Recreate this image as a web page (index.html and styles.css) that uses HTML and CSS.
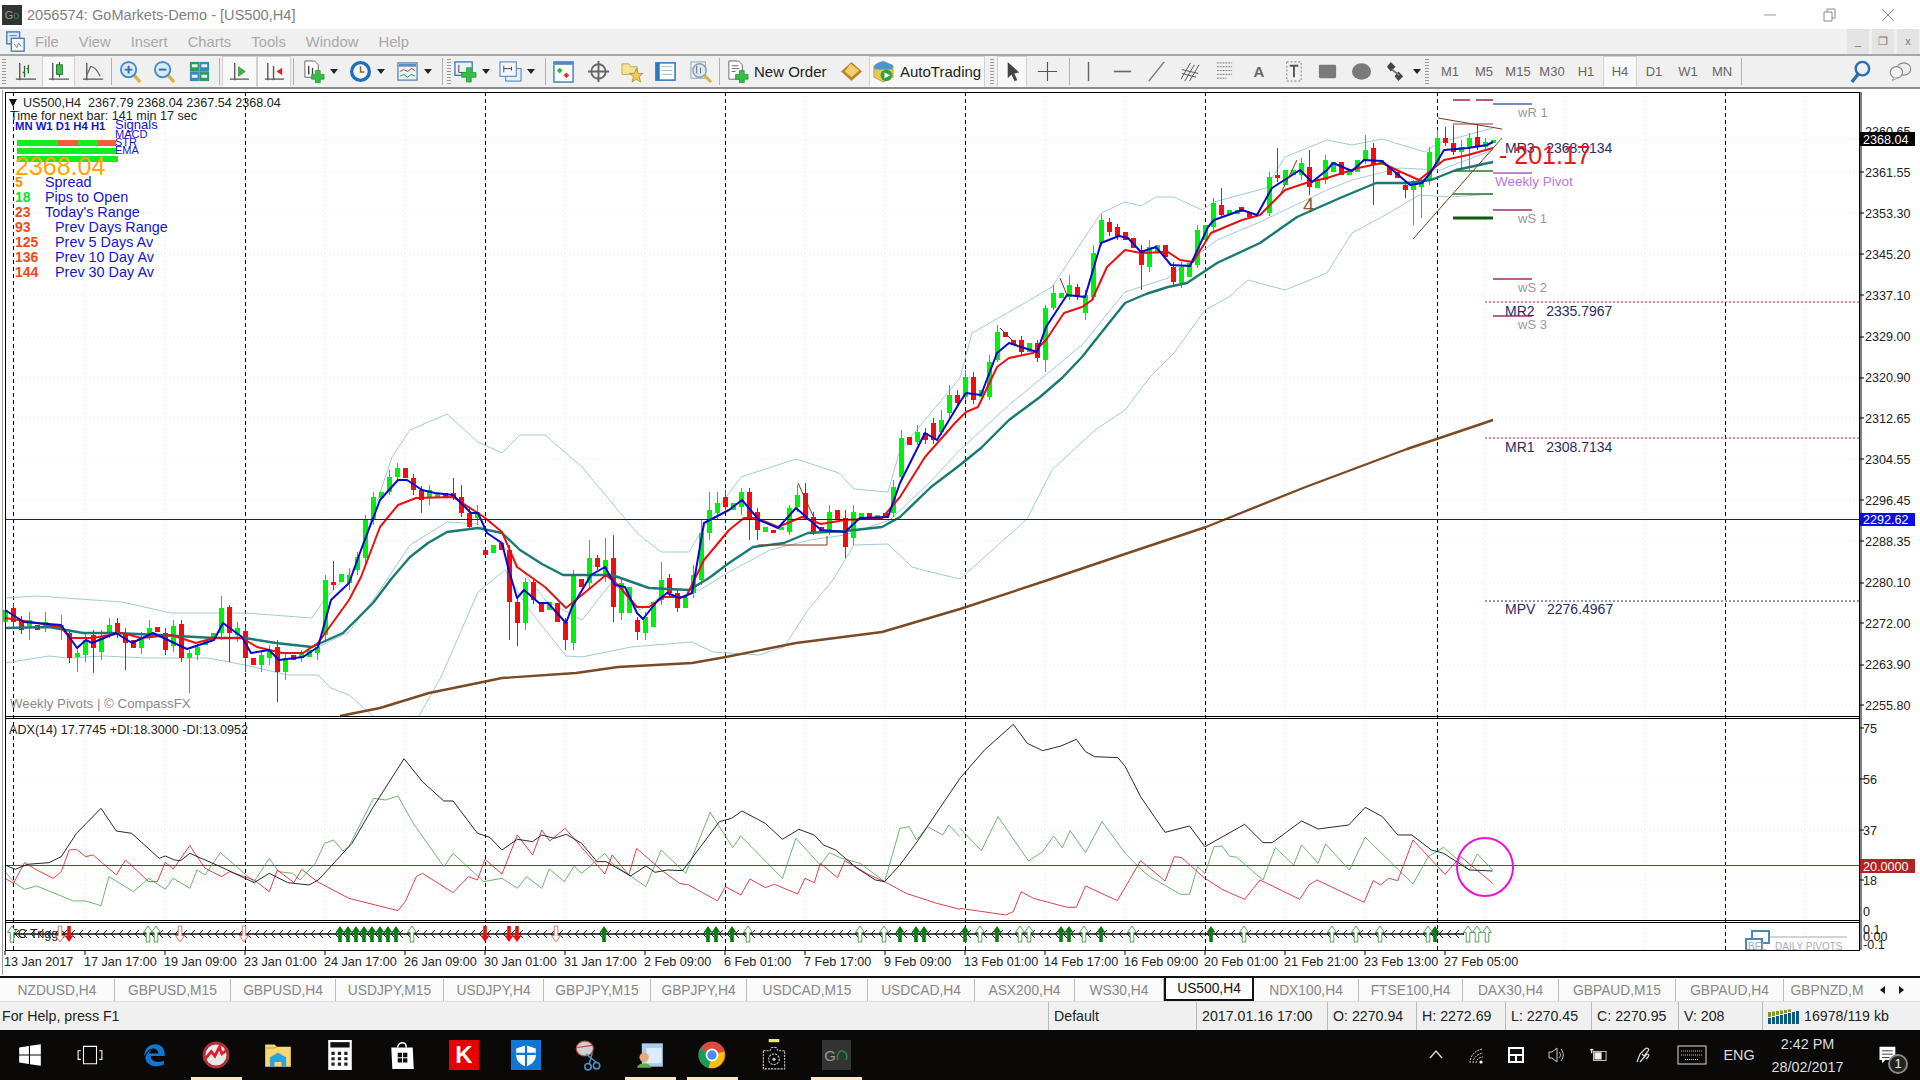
FILE: index.html
```html
<!DOCTYPE html>
<html lang="en">
<head>
<meta charset="utf-8">
<title>2056574: GoMarkets-Demo - [US500,H4]</title>
<link rel="stylesheet" href="styles.css">
</head>
<body>
<svg class="defs" width="0" height="0" aria-hidden="true">
  <defs>
    <symbol id="i-bar" viewBox="0 0 24 24"><path d="M6 3V21M2 20H23M3 20l3 0" fill="none" stroke="#555" stroke-width="1.4"/><path d="M11 6V18M15 5V14M13 9h2M9 13h2" fill="none" stroke="#2c6b2c" stroke-width="1.4"/></symbol>
    <symbol id="i-candle" viewBox="0 0 24 24"><path d="M6 3V21M2 20H23" fill="none" stroke="#555" stroke-width="1.4"/><path d="M13 2V18" stroke="#333"/><rect x="10" y="5" width="6" height="10" fill="#3fc04a" stroke="#2a6a2a"/></symbol>
    <symbol id="i-line" viewBox="0 0 24 24"><path d="M6 3V21M2 20H23" fill="none" stroke="#555" stroke-width="1.4"/><path d="M6 16L10 7C14 6 17 11 20 17" fill="none" stroke="#666" stroke-width="1.3"/></symbol>
    <symbol id="i-zin" viewBox="0 0 24 24"><path d="M15 15L22 23" stroke="#d9b13b" stroke-width="3.4"/><circle cx="10" cy="10" r="8" fill="#d8e9f8" stroke="#4d8cc8" stroke-width="2"/><path d="M6 10H14M10 6V14" stroke="#2c6cb0" stroke-width="2"/></symbol>
    <symbol id="i-zout" viewBox="0 0 24 24"><path d="M15 15L22 23" stroke="#d9b13b" stroke-width="3.4"/><circle cx="10" cy="10" r="8" fill="#d8e9f8" stroke="#4d8cc8" stroke-width="2"/><path d="M6 10H14" stroke="#2c6cb0" stroke-width="2"/></symbol>
    <symbol id="i-tile" viewBox="0 0 24 24"><rect x="2" y="2" width="10" height="10" fill="#2d9b5b"/><rect x="12" y="2" width="10" height="10" fill="#3b87c9"/><rect x="2" y="12" width="10" height="10" fill="#3b87c9"/><rect x="12" y="12" width="10" height="10" fill="#2d9b5b"/><path d="M4 6h6M14 6h6M4 17h6M14 17h6" stroke="#e8f4ec" stroke-width="3"/></symbol>
    <symbol id="i-shift" viewBox="0 0 24 24"><path d="M7 3V21M2 20H22" fill="none" stroke="#555" stroke-width="1.4"/><path d="M11 7L18 12L11 17Z" fill="#3cb84a" stroke="#2a7a2a" stroke-width=".6"/></symbol>
    <symbol id="i-scroll" viewBox="0 0 24 24"><path d="M5 3V21M11 6V21M2 20H22" fill="none" stroke="#555" stroke-width="1.4"/><path d="M14 12L20 8V16Z" fill="#d8272d"/></symbol>
    <symbol id="i-newc" viewBox="0 0 24 24"><path d="M3 1H13L17 5V18H3Z" fill="#fff" stroke="#666"/><path d="M7 6V15M11 8V15" stroke="#444" stroke-width="1.4"/><path d="M14 11H19V15H23V20H19V24H14V20H10V15H14Z" fill="#36c043" stroke="#1c8a28" stroke-width=".7"/></symbol>
    <symbol id="i-clock" viewBox="0 0 24 24"><circle cx="12" cy="12" r="11" fill="#1d6fb8"/><circle cx="12" cy="12" r="7.5" fill="#f2f6fa"/><path d="M12 6.5V12.5H16" fill="none" stroke="#a05a20" stroke-width="1.5"/></symbol>
    <symbol id="i-ind" viewBox="0 0 24 24"><rect x="2" y="3" width="20" height="18" fill="#e8f0f8" stroke="#5a8bb8" stroke-width="1.4"/><rect x="3" y="4" width="18" height="3" fill="#5a90c4"/><path d="M4 12L8 10L12 12L16 9L20 11" fill="none" stroke="#c8362c"/><path d="M4 17L8 15L12 18L16 15L20 17" fill="none" stroke="#2b9b3c"/></symbol>
    <symbol id="i-add" viewBox="0 0 24 24"><rect x="1" y="2" width="18" height="14" fill="#e8f0f8" stroke="#3f7ab4" stroke-width="1.4"/><path d="M5 5V13M5 13H11" stroke="#444"/><path d="M13 8H18V13H23V18H18V23H13V18H8V13H13Z" fill="#36c043" stroke="#1c8a28" stroke-width=".7"/></symbol>
    <symbol id="i-tpl" viewBox="0 0 24 24"><rect x="7" y="9" width="16" height="13" fill="#e6eef7" stroke="#3f7ab4"/><rect x="1" y="2" width="17" height="15" fill="#f2f6fb" stroke="#3f7ab4"/><path d="M5 6V13M5 9H13M13 7V11" stroke="#444"/></symbol>
    <symbol id="i-nav" viewBox="0 0 24 24"><rect x="2" y="2" width="20" height="21" fill="#fff" stroke="#4b8ac4" stroke-width="1.6"/><rect x="2" y="2" width="20" height="3" fill="#4b8ac4"/><path d="M8 8l3 3-3 3-3-3z" fill="#2fb34a"/><path d="M15 13l3 3-3 3-3-3z" fill="#d8372d"/></symbol>
    <symbol id="i-cross" viewBox="0 0 24 24"><circle cx="12" cy="12" r="7.5" fill="none" stroke="#666" stroke-width="2"/><path d="M12 1V23M1 12H23" stroke="#666" stroke-width="2"/></symbol>
    <symbol id="i-star" viewBox="0 0 24 24"><path d="M1 4H8L10 7H17V15H1Z" fill="#f5e29a" stroke="#c9a83a"/><path d="M16 9L18 14H23L19 17.500L20.500 23L16 20L11.500 23L13 17.500L9 14H14Z" fill="#f2cd4b" stroke="#a88624" stroke-width=".8"/></symbol>
    <symbol id="i-list" viewBox="0 0 24 24"><rect x="2" y="3" width="20" height="18" fill="#fff" stroke="#2f78bc" stroke-width="1.6"/><rect x="2" y="3" width="4" height="18" fill="#2f78bc"/><path d="M8 7H19M8 11H19M8 15H19" stroke="#9ab8d4"/></symbol>
    <symbol id="i-find" viewBox="0 0 24 24"><rect x="2" y="2" width="15" height="17" fill="#eef3f8" stroke="#8ca4bc"/><circle cx="11" cy="11" r="7" fill="#dbe7f2" stroke="#8c9cac" stroke-width="1.5"/><path d="M16 16L23 23" stroke="#d9b13b" stroke-width="3"/><path d="M8 6V14M12 8V14" stroke="#667"/></symbol>
    <symbol id="i-order" viewBox="0 0 24 24"><path d="M3 1H13L17 5V20H3Z" fill="#fff" stroke="#666"/><path d="M6 6H13M6 9H14M6 12H10" stroke="#667"/><path d="M14 11H19V15H23V20H19V24H14V20H10V15H14Z" fill="#36c043" stroke="#1c8a28" stroke-width=".7"/></symbol>
    <symbol id="i-gold" viewBox="0 0 24 24"><path d="M12 2L23 12L12 22L1 12Z" fill="#b8842c"/><path d="M11 4L20 11L12 18L5 12Z" fill="#f0cf6c"/></symbol>
    <symbol id="i-auto" viewBox="0 0 24 24"><path d="M2 6L12 1L22 6V18L12 23L2 18Z" fill="#e9c65a" stroke="#a88a30" stroke-width=".7"/><path d="M2 8C4 2 12 0 17 4C22 3 23 8 20 10H4Z" fill="#4a94d4"/><circle cx="15" cy="16" r="6" fill="#2fa53f"/><path d="M13 13L19 16L13 19Z" fill="#fff"/></symbol>
    <symbol id="i-cur" viewBox="0 0 24 24"><path d="M7 2L19 13L14 14L17 21L14 22L11 15L7 19Z" fill="#444"/></symbol>
    <symbol id="i-plus" viewBox="0 0 24 24"><path d="M12 2V22M2 12H22" stroke="#555" stroke-width="1.2"/></symbol>
    <symbol id="i-vl" viewBox="0 0 24 24"><path d="M12 2V22" stroke="#666" stroke-width="1.5"/></symbol>
    <symbol id="i-hl" viewBox="0 0 24 24"><path d="M3 12H21" stroke="#666" stroke-width="1.7"/></symbol>
    <symbol id="i-tl" viewBox="0 0 24 24"><path d="M4 22L20 2" stroke="#777" stroke-width="1.5"/></symbol>
    <symbol id="i-chan" viewBox="0 0 24 24"><path d="M2 20L12 3M6 22L16 5M11 22L21 5M3 10L20 14M3 14L18 18" stroke="#555" fill="none"/></symbol>
    <symbol id="i-fib" viewBox="0 0 24 24"><path d="M4 3H20M4 7H20M4 11H20M4 15H20M4 19H14" stroke="#777" stroke-dasharray="2 1" fill="none"/></symbol>
    <symbol id="i-tbox" viewBox="0 0 24 24"><rect x="5" y="2" width="15" height="20" fill="none" stroke="#777" stroke-dasharray="2 2"/><path d="M8 6H17M12.500 6V18" stroke="#555" stroke-width="2"/></symbol>
    <symbol id="i-rect" viewBox="0 0 24 24"><rect x="3" y="5" width="18" height="14" rx="1.500" fill="#7a7a7a"/></symbol>
    <symbol id="i-ell" viewBox="0 0 24 24"><ellipse cx="12" cy="12" rx="10" ry="8.500" fill="#7a7a7a"/></symbol>
    <symbol id="i-shape" viewBox="0 0 24 24"><path d="M6 2L11 7L6 12L2 7Z" fill="#444"/><path d="M14 12L19 17L14 22L10 17Z" fill="#444"/><path d="M7 10L15 16" stroke="#777" stroke-width="2"/></symbol>
    <symbol id="i-lens" viewBox="0 0 24 24"><path d="M10 14L3 23" stroke="#2c6cb0" stroke-width="3.500"/><circle cx="14" cy="9" r="7" fill="#e8f1f8" stroke="#2c6cb0" stroke-width="2.500"/></symbol>
    <symbol id="i-chat" viewBox="0 0 28 24"><ellipse cx="18" cy="9" rx="8.500" ry="7.500" fill="#eee" stroke="#888" stroke-width="1.400"/><ellipse cx="9" cy="13" rx="7.500" ry="7" fill="#f6f6f6" stroke="#888" stroke-width="1.400"/><path d="M6 19L4 23L10 20" fill="#eee" stroke="#888"/></symbol>
    <symbol id="i-app" viewBox="0 0 24 24"><rect x="3" y="1" width="14" height="13" fill="#dbe8f5" stroke="#4a7cb0" stroke-width="1.500"/><rect x="8" y="8" width="14" height="14" fill="#fff" stroke="#4a7cb0" stroke-width="1.500"/><path d="M6 5H14M11 14L14 18L16 13L19 17" stroke="#4a7cb0" fill="none"/></symbol>
    <path id="up" d="M0-8L4.500-1.500H1.800V8H-1.800V-1.500H-4.500Z"/>
    <path id="down" d="M0 8L4.500 1.500H1.800V-8H-1.800V1.500H-4.500Z"/>
    <pattern id="chain" width="8" height="14" patternUnits="userSpaceOnUse" x="5" y="927">
      <path d="M6 3L2 7L6 11" fill="none" stroke="#222"/>
    </pattern>
  </defs>
</svg>

<header class="titlebar">
  <span class="logo">G<i>o</i></span>
  <span class="title">2056574: GoMarkets-Demo - [US500,H4]</span>
  <div class="winctl">
    <svg class="wc" viewBox="0 0 14 14"><path d="M1 7H13" stroke="#999"/></svg>
    <svg class="wc" viewBox="0 0 14 14"><path d="M2 4H10V13H2ZM5 4V1H13V10H10" fill="none" stroke="#888"/></svg>
    <svg class="wc" viewBox="0 0 14 14"><path d="M1 1L13 13M13 1L1 13" stroke="#888"/></svg>
  </div>
</header>

<nav class="menubar">
  <svg class="appicon"><use href="#i-app"/></svg>
  <span>File</span><span>View</span><span>Insert</span><span>Charts</span><span>Tools</span><span>Window</span><span>Help</span>
  <div class="mdi"><b>_</b><b>&#10064;</b><b>x</b></div>
</nav>

<div class="toolbar">
  <i class="grip"></i>
  <span class="tb w34"><svg><use href="#i-bar"/></svg></span>
  <span class="tb w33 on"><svg><use href="#i-candle"/></svg></span>
  <span class="tb w34"><svg><use href="#i-line"/></svg></span>
  <i class="sep"></i>
  <span class="tb w34"><svg><use href="#i-zin"/></svg></span>
  <span class="tb w35"><svg><use href="#i-zout"/></svg></span>
  <span class="tb w34"><svg><use href="#i-tile"/></svg></span>
  <i class="sep s6"></i>
  <span class="tb w35 on"><svg><use href="#i-shift"/></svg></span>
  <span class="tb w34 on"><svg><use href="#i-scroll"/></svg></span>
  <i class="sep"></i>
  <span class="tb drop w50 p7"><svg><use href="#i-newc"/></svg><em></em></span>
  <span class="tb drop w48 p4"><svg><use href="#i-clock"/></svg><em></em></span>
  <span class="tb drop w46 p3"><svg><use href="#i-ind"/></svg><em></em></span>
  <i class="sep s6"></i><i class="grip g6"></i>
  <span class="tb drop w48 p3"><svg><use href="#i-add"/></svg><em></em></span>
  <span class="tb drop w44 p0"><svg><use href="#i-tpl"/></svg><em></em></span>
  <i class="sep s4"></i>
  <span class="tb w32"><svg><use href="#i-nav"/></svg></span>
  <span class="tb w38"><svg><use href="#i-cross"/></svg></span>
  <span class="tb w30"><svg><use href="#i-star"/></svg></span>
  <span class="tb w36"><svg><use href="#i-list"/></svg></span>
  <span class="tb w34"><svg><use href="#i-find"/></svg></span>
  <i class="sep"></i>
  <span class="tb txt w118"><svg><use href="#i-order"/></svg>New Order</span>
  <span class="tb w24"><svg><use href="#i-gold"/></svg></span>
  <span class="tb txt w116 auto on"><svg><use href="#i-auto"/></svg>AutoTrading</span>
  <i class="grip g12"></i>
  <span class="tb w30 on"><svg><use href="#i-cur"/></svg></span>
  <span class="tb w40"><svg><use href="#i-plus"/></svg></span>
  <i class="sep"></i>
  <span class="tb w34"><svg><use href="#i-vl"/></svg></span>
  <span class="tb w34"><svg><use href="#i-hl"/></svg></span>
  <span class="tb w34"><svg><use href="#i-tl"/></svg></span>
  <span class="tb w34"><svg><use href="#i-chan"/></svg></span>
  <span class="tb w35"><svg><use href="#i-fib"/></svg></span>
  <span class="tb w34 letter">A</span>
  <span class="tb w34"><svg><use href="#i-tbox"/></svg></span>
  <span class="tb w34"><svg><use href="#i-rect"/></svg></span>
  <span class="tb w34"><svg><use href="#i-ell"/></svg></span>
  <span class="tb drop w44 p7"><svg><use href="#i-shape"/></svg><em></em></span>
  <i class="grip g11"></i>
  <span class="tf">M1</span><span class="tf">M5</span><span class="tf">M15</span><span class="tf">M30</span><span class="tf">H1</span><span class="tf on">H4</span><span class="tf">D1</span><span class="tf">W1</span><span class="tf">MN</span>
  <i class="sep"></i>
  <span class="tb push w40"><svg><use href="#i-lens"/></svg></span>
  <span class="tb w40"><svg><use href="#i-chat"/></svg></span>
</div>

<main class="chart">
<svg class="plot" viewBox="0 89 1920 887" width="1920" height="887">
  <rect x="0" y="89" width="1920" height="887" fill="#fff"/>
  <path class="grid" d="M5 172H1859M5 213H1859M5 254H1859M5 295H1859M5 337H1859M5 378H1859M5 418H1859M5 459H1859M5 500H1859M5 541H1859M5 583H1859M5 623H1859M5 665H1859M5 705H1859M5 779H1859M5 830H1859M5 880H1859M85 92V950M165 92V950M325 92V950M405 92V950M565 92V950M645 92V950M805 92V950M885 92V950M1045 92V950M1125 92V950M1285 92V950M1365 92V950M1485 92V950M1565 92V950M1645 92V950M1805 92V950"/>
  <path class="bid" d="M5 139H1859"/>
  <path class="dash" d="M13.500 92V950M245.500 92V950M485.500 92V950M725.500 92V950M965.500 92V950M1205.500 92V950M1437.500 92V950M1725.500 92V950"/>

  <!-- moving averages and bands -->
  <polyline class="bb" points="5,598 37,596 122,602 171,613 245,613 312,618 324,600 355,567 392,457 410,430 447,414 478,442 502,453 520,435 545,435 582,467 637,533 661,552 689,552 704,527 741,477 796,459 839,473 854,489 888,492 900,450 960,378 972,333 1030,300 1052,287 1101,213 1125,202 1141,206 1156,197 1174,197 1202,210 1214,202 1266,188 1285,157 1327,140 1352,145 1382,139 1425,152 1438,143 1493,128"/>
  <polyline class="bb" points="5,663 49,656 67,658 104,656 147,658 208,658 245,665 288,675 318,675 331,688 349,695 373,716"/>
  <polyline class="bb" points="419,716 441,677 478,592 505,570 527,607 566,656 582,657 631,647 692,642 713,652 759,655 784,647 808,610 833,580 854,545 888,544 912,567 931,572 960,579 1027,519 1052,470 1095,430 1125,410 1150,377 1174,353 1205,310 1229,297 1248,280 1285,290 1327,273 1352,233 1389,213 1419,195 1450,197 1493,194"/>
  <polyline class="bb" points="318,647 349,632 380,590 410,545 447,522 478,524 505,548 545,600 582,620 612,582 640,610 672,590 700,590 729,572 770,550 810,540 845,535 890,520 930,482 960,450 1009,405 1082,345 1125,292 1168,278 1217,240 1260,222 1327,190 1352,180 1400,168 1440,170 1493,150"/>
  <g transform="translate(.5 0)">
    <path class="wg" d="M5 590V628M29 612V640M45 612V632M61 615V640M77 648V672M85 632V662M101 630V660M109 618V638M141 632V654M149 620V640M173 620V652M189 650V693M197 644V660M221 596V640M237 622V642M261 650V672M269 645V665M285 654V680M301 650V662M317 642V660M325 575V640M349 568V590M357 552V575M365 515V565M373 492V525M389 470V495M397 463V480M429 485V505M477 505V525M525 578V630M573 570V650M589 540V590M605 538V582M621 578V620M645 612V640M661 562V605M693 565V598M701 520V585M709 492V540M717 492V520M741 488V515M789 505V535M797 485V512M829 505V535M853 505V545M893 480V517M901 430V480M917 425V445M941 410V435M949 385V418M965 370V400M989 355V400M997 325V362M1045 305V372M1053 285V310M1069 275V300M1085 290V320M1093 245V300M1101 214V246M1149 240V272M1181 262V288M1197 225V268M1213 198V232M1269 172V216M1301 158V180M1325 155V184M1365 135V164M1413 180V225M1421 178V218M1429 147V185M1437 130V166M1461 140V170M1469 133V170M1485 138V150"/>
    <path class="wr" d="M13 604V628M21 616V634M69 630V663M93 630V673M117 618V638M125 628V670M165 628V655M181 620V662M229 605V662M245 627V672M277 640V702M333 561V590M413 474V495M421 486V513M453 478V500M461 485V517M469 508V530M509 545V640M517 598V646M533 578V604M565 618V650M597 555V570M613 535V622M637 617V640M669 574V597M677 590V612M725 490V510M749 488V540M757 508V540M805 483V520M813 512V535M845 510V558M925 428V444M933 418V444M957 390V406M973 372V404M1021 336V356M1037 340V362M1077 284V300M1109 218V236M1117 224V240M1141 245V290M1173 262V285M1221 188V218M1277 148V182M1309 150V195M1373 143V205M1405 182V198M1445 127V146M1453 125V155M1477 124V150"/>
    <path class="bg" d="M5 610V622M29 620V626M45 622V628M61 625V630M77 653V657M85 640V655M101 637V652M109 625V633M141 638V648M149 628V635M173 626V646M189 653V658M197 647V655M205 640V645M213 633V638M221 608V633M237 628V635M261 655V665M269 650V658M285 658V672M301 653V658M309 650V657M317 647V653M325 580V635M341 574V582M349 575V583M357 557V570M365 520V558M373 497V520M381 492V498M389 477V492M397 468V477M429 490V497M437 493V497M477 512V518M493 545V553M525 582V623M549 602V610M573 575V643M589 558V583M605 560V577M621 583V613M629 587V613M645 617V633M653 602V627M661 580V600M685 598V608M693 575V593M701 533V580M709 510V533M717 503V513M733 503V510M741 492V507M765 527V532M781 527V530M789 508V532M797 495V507M829 512V530M853 512V538M861 513V518M877 515V518M893 487V513M901 438V477M917 432V442M941 420V432M949 395V413M965 377V397M981 390V397M989 362V397M997 332V360M1029 343V352M1045 308V360M1053 293V308M1061 293V298M1069 285V297M1085 295V313M1093 253V297M1101 220V243M1149 247V267M1157 245V252M1181 267V283M1189 263V277M1197 230V265M1205 225V240M1213 203V227M1229 210V215M1237 210V214M1269 177V213M1285 170V185M1293 170V175M1301 163V175M1317 180V188M1325 160V180M1333 162V172M1349 172V175M1357 160V172M1365 150V160M1381 160V165M1413 183V190M1421 182V187M1429 152V180M1437 138V163M1461 147V152M1469 138V147M1485 142V147M1493 140V143"/>
    <path class="br" d="M13 608V622M21 620V630M37 625V630M53 624V628M69 633V658M93 635V648M117 623V633M125 633V643M133 640V648M157 627V632M165 633V650M181 624V658M229 607V633M245 631V658M253 658V665M277 647V672M293 655V660M333 582V585M405 468V478M413 478V490M421 490V500M445 493V497M453 493V497M461 497V513M469 513V527M485 550V555M501 543V550M509 550V602M517 602V623M533 582V600M541 602V612M557 603V622M565 622V640M581 579V587M597 558V567M613 558V607M637 620V632M669 578V593M677 593V608M725 497V507M749 492V517M757 512V530M773 530V533M805 493V517M813 517V532M821 527V533M837 510V520M845 518V547M869 513V518M885 513V517M909 437V445M925 433V440M933 423V440M957 395V403M973 377V400M1005 332V337M1013 340V345M1021 340V352M1037 343V358M1077 287V297M1109 222V232M1117 227V237M1125 232V240M1133 238V248M1141 250V265M1165 245V257M1173 267V282M1221 205V215M1241 207V212M1249 212V217M1277 175V178M1309 167V187M1341 162V175M1373 148V165M1389 167V175M1397 172V178M1405 185V190M1445 138V143M1453 143V152M1477 137V147"/>
  </g>
  <polyline class="teal" points="5,628 49,627 83,633 116,633 159,635 214,638 245,638 276,643 312,647 343,633 373,603 392,578 410,557 428,543 447,532 478,528 502,533 520,550 542,564 563,575 612,575 649,588 689,590 709,578 729,563 753,547 784,543 808,533 845,531 882,527 900,517 931,487 960,465 981,448 1009,420 1040,397 1062,378 1082,357 1105,328 1125,303 1146,294 1168,287 1187,283 1217,263 1260,243 1297,217 1340,198 1376,183 1407,183 1431,180 1456,170 1493,162"/>
  <polyline class="red" points="5,618 37,623 61,627 70,638 92,638 122,633 141,638 171,635 196,643 214,638 242,638 257,647 282,653 303,653 318,643 349,600 361,577 380,527 398,505 416,498 453,497 484,517 502,532 517,567 545,587 566,608 588,590 606,575 618,585 637,607 649,607 664,597 686,597 704,560 729,530 744,518 756,518 778,527 802,517 821,524 845,520 882,518 900,497 925,457 955,423 966,412 978,407 997,367 1009,358 1033,353 1046,340 1064,313 1082,307 1092,300 1107,267 1125,250 1141,253 1168,252 1180,260 1193,262 1211,233 1242,220 1260,215 1285,190 1309,182 1327,178 1358,168 1382,163 1401,172 1419,180 1444,160 1468,155 1493,148"/>
  <polyline class="blue" points="5,610 24,622 61,625 77,648 86,640 92,643 116,633 132,643 153,633 187,649 214,640 223,623 242,637 251,653 269,650 279,660 303,657 318,647 331,600 349,583 361,550 380,500 398,480 407,480 422,490 435,493 453,495 471,513 478,513 487,533 502,543 508,567 517,598 524,590 539,603 548,603 566,623 572,607 591,575 605,567 615,585 625,587 637,613 643,619 658,600 667,593 680,598 692,593 704,523 729,510 742,500 759,520 778,528 796,508 821,530 845,532 860,518 888,517 900,483 925,433 937,440 960,402 966,393 981,395 997,353 1009,343 1021,347 1037,352 1046,327 1067,295 1085,297 1101,243 1119,236 1128,238 1141,252 1156,247 1171,265 1190,266 1208,227 1214,220 1242,210 1257,215 1272,188 1300,170 1312,182 1327,170 1333,163 1352,171 1364,160 1382,161 1410,185 1422,183 1431,172 1444,150 1468,148 1487,145 1493,142"/>
  <polyline class="ma200" points="340,716 380,708 429,693 478,683 502,678 576,673 618,667 692,663 726,657 796,643 882,632 960,609 1045,581 1125,554 1206,527 1226,519 1303,488 1407,449 1493,420"/>

  <!-- thin trend lines -->
  <path class="trend" d="M1413 239L1502 138M1438 118L1502 129M1000 328L1024 352M1060 278L1067 295M1297 160L1280 195M758 545H827V536M798 483L815 520"/>

  <!-- pivot markers -->
  <path class="lvl-d" d="M1453 100H1470M1476 100H1493"/>
  <path class="lvl-b" d="M1493 104H1532"/>
  <path class="lvl-dr" d="M1453 124H1493"/>
  <path class="lvl-g" d="M1453 171H1493M1453 194H1493"/>
  <path class="lvl-gg" d="M1453 218H1493"/>
  <path class="lvl-v" d="M1493 173H1532"/>
  <path class="lvl-m" d="M1493 210H1532M1493 279H1532M1493 316H1532"/>
  <path class="lvl-rd" d="M1485 302H1859M1485 438H1859"/>
  <path class="lvl-nv" d="M1485 601H1859"/>
  <path class="hline" d="M5 519.500H1859"/>
  <path class="frame" d="M1861 92V950"/>

  <text class="t-wk" x="1518" y="117">wR 1</text>
  <text class="t-mr" x="1505" y="153">MR3&#160;&#160;&#160;2368.0134</text>
  <text class="t-big" x="1499" y="164">- 201.17</text>
  <text class="t-wp" x="1495" y="186">Weekly Pivot</text>
  <text class="t-wk" x="1518" y="223">wS 1</text>
  <text class="t-wk" x="1518" y="292">wS 2</text>
  <text class="t-mr" x="1505" y="316">MR2&#160;&#160;&#160;2335.7967</text>
  <text class="t-wk" x="1518" y="329">wS 3</text>
  <text class="t-mr" x="1505" y="452">MR1&#160;&#160;&#160;2308.7134</text>
  <text class="t-mr" x="1505" y="614">MPV&#160;&#160;&#160;2276.4967</text>
  <text class="t-four" x="1303" y="212">4</text>

  <!-- heading text -->
  <path class="tri" d="M9 99H17L13 107Z"/>
  <text class="t-h" x="23" y="107">US500,H4&#160;&#160;2367.79 2368.04 2367.54 2368.04</text>
  <text class="t-h" x="10" y="120">Time for next bar: 141 min 17 sec</text>
  <text class="t-tf" x="15" y="130">MN W1 D1 H4 H1</text>
  <text class="t-sg" x="115" y="129">Signals</text>
  <text class="t-sm" x="115" y="138">MACD</text>
  <text class="t-sm" x="115" y="146">STR</text>
  <text class="t-sm" x="115" y="154">EMA</text>
  <path class="bar-g" d="M17 143H116M17 151H116M17 159H118"/>
  <path class="bar-r" d="M58 143H78M98 143H116"/>
  <text class="t-or" x="15" y="175">2368.04</text>
  <text class="t-n n-o" x="15" y="187">5</text><text class="t-l" x="45" y="187">Spread</text>
  <text class="t-n n-g" x="15" y="202">18</text><text class="t-l" x="45" y="202">Pips to Open</text>
  <text class="t-n n-r" x="15" y="217">23</text><text class="t-l" x="45" y="217">Today's Range</text>
  <text class="t-n n-r" x="15" y="232">93</text><text class="t-l" x="55" y="232">Prev Days Range</text>
  <text class="t-n n-r" x="15" y="247">125</text><text class="t-l" x="55" y="247">Prev 5 Days Av</text>
  <text class="t-n n-r" x="15" y="262">136</text><text class="t-l" x="55" y="262">Prev 10 Day Av</text>
  <text class="t-n n-r" x="15" y="277">144</text><text class="t-l" x="55" y="277">Prev 30 Day Av</text>
  <text class="t-wm" x="10" y="708">Weekly Pivots | &#169; CompassFX</text>

  <!-- ADX pane -->
  <text class="t-h" x="9" y="734">ADX(14) 17.7745 +DI:18.3000 -DI:13.0952</text>
  <path class="l20" d="M5 865.500H1859"/>
  <g transform="translate(0 700) scale(.6122 .3333)">
    <polyline class="a-g" points="8,515 25,550 40,568 60,558 120,603 140,603 165,617 178,530 218,575 243,535 270,568 283,535 310,565 322,510 335,525 360,458 415,545 440,475 455,515 478,520 490,540 515,490 530,430 545,420 560,453 570,440 610,295 630,300 650,288 675,370 725,500 740,460 790,545 820,535 845,565 860,530 885,565 897,507 922,545 938,498 950,520 988,460 1000,490 1055,560 1080,450 1120,520 1160,337 1197,443 1210,408 1278,535 1300,415 1340,495 1355,458 1375,475 1405,490 1445,545 1470,385 1485,380 1497,420 1515,380 1540,405 1550,375 1568,410"/>
    <polyline class="a-r" points="8,535 22,550 40,488 60,510 87,535 100,515 113,450 125,448 140,470 152,465 190,525 205,480 243,545 257,545 270,487 283,507 310,437 335,505 362,530 375,515 415,540 440,575 453,510 480,548 493,508 518,545 570,595 650,632 662,605 680,530 690,520 740,578 765,530 780,540 792,478 820,522 845,405 870,465 885,390 898,423 923,385 988,522 1000,465 1027,525 1040,445 1080,510 1110,550 1125,555 1172,603 1185,560 1210,585 1225,537 1250,563 1265,553 1303,582 1315,535 1330,548 1340,490 1368,533 1380,482 1420,525 1445,545 1480,580 1530,610 1568,628"/>
    <polyline class="a-k" points="8,495 25,508 45,493 80,488 100,470 125,400 165,325 190,393 215,400 260,475 270,468 285,480 295,482 310,460 360,500 415,548 440,520 470,548 505,555 520,540 575,430 610,320 660,176 690,245 725,303 740,303 780,400 800,412 820,450 845,418 870,425 885,405 905,415 925,403 950,430 975,485 990,485 1030,528 1055,498 1070,517 1090,510 1115,512 1175,365 1195,355 1212,333 1250,370 1278,418 1305,388 1330,405 1345,435 1365,450 1400,505 1430,540 1445,545 1470,495 1500,420 1568,235"/>
  </g>
  <g transform="translate(960 700) scale(.6122 .3333)">
    <polyline class="a-g" points="0,385 35,452 62,350 112,483 135,455 153,408 167,443 180,392 205,458 232,365 270,460 295,507 310,530 360,583 375,583 388,500 400,520 415,440 428,438 440,468 452,472 495,540 515,443 545,495 558,435 585,490 597,432 636,510 662,412 740,552 765,470 790,442 832,510 845,462 870,510"/>
    <polyline class="a-r" points="0,625 75,645 87,635 100,575 120,595 175,622 190,622 205,558 257,602 280,530 295,482 335,543 350,470 362,473 400,535 430,570 465,598 490,540 555,598 570,555 583,540 660,607 675,542 687,555 700,535 715,542 740,420 792,523 818,470 870,550"/>
    <polyline class="a-k" points="0,235 40,150 87,73 110,130 135,152 165,138 190,118 205,155 220,170 258,173 270,200 295,290 335,397 375,378 400,440 465,373 495,428 510,428 558,363 585,387 635,375 662,322 690,350 715,405 738,405 770,450 790,460 832,510 870,513"/>
  </g>
  <ellipse class="ring" cx="1485" cy="867" rx="28" ry="29"/>

  <!-- TC trigger pane -->
  <rect x="10" y="927" width="1454" height="14" fill="url(#chain)"/>
  <path class="chainline" d="M10 934H1464"/>
  <text class="t-tc" x="10" y="938">TC Trigge</text>
  <g class="ar-g">
    <use href="#up" x="340" y="934"/><use href="#up" x="348" y="934"/><use href="#up" x="356" y="934"/><use href="#up" x="364" y="934"/><use href="#up" x="372" y="934"/><use href="#up" x="380" y="934"/><use href="#up" x="388" y="934"/><use href="#up" x="396" y="934"/><use href="#up" x="604" y="934"/><use href="#up" x="708" y="934"/><use href="#up" x="716" y="934"/><use href="#up" x="732" y="934"/><use href="#up" x="900" y="934"/><use href="#up" x="916" y="934"/><use href="#up" x="924" y="934"/><use href="#up" x="965" y="934"/><use href="#up" x="997" y="934"/><use href="#up" x="1061" y="934"/><use href="#up" x="1069" y="934"/><use href="#up" x="1101" y="934"/><use href="#up" x="1211" y="934"/><use href="#up" x="1435" y="934"/>
  </g>
  <g class="ar-o">
    <use href="#up" x="12" y="934"/><use href="#up" x="148" y="934"/><use href="#up" x="156" y="934"/><use href="#up" x="412" y="934"/><use href="#up" x="748" y="934"/><use href="#up" x="860" y="934"/><use href="#up" x="884" y="934"/><use href="#up" x="980" y="934"/><use href="#up" x="1020" y="934"/><use href="#up" x="1029" y="934"/><use href="#up" x="1084" y="934"/><use href="#up" x="1132" y="934"/><use href="#up" x="1244" y="934"/><use href="#up" x="1332" y="934"/><use href="#up" x="1356" y="934"/><use href="#up" x="1380" y="934"/><use href="#up" x="1428" y="934"/><use href="#up" x="1468" y="934"/><use href="#up" x="1477" y="934"/><use href="#up" x="1487" y="934"/>
  </g>
  <g class="ar-r">
    <use href="#down" x="69" y="934"/><use href="#down" x="485" y="934"/><use href="#down" x="509" y="934"/><use href="#down" x="517" y="934"/>
  </g>
  <g class="ar-ro">
    <use href="#down" x="60" y="934"/><use href="#down" x="180" y="934"/><use href="#down" x="244" y="934"/><use href="#down" x="556" y="934"/>
  </g>
  <path class="pv-line" d="M1768 937H1847"/>
  <rect class="pv-b" x="1752" y="931" width="17" height="12"/>
  <rect class="pv-c" x="1746" y="939" width="16" height="11"/>
  <text class="t-pv" x="1748" y="950">BEL</text>
  <text class="t-pv" x="1775" y="950">DAILY PIVOTS</text>

  <!-- pane frames -->
  <path class="frame" d="M5 92.500H1859M5 716.500H1859M5 718.500H1859M5 920.500H1859M5 922.500H1859M5 950.500H1859M5.500 92V951M1859.500 92V951"/>
  <path class="frame-l" d="M2.500 90V975"/>

  <!-- axes -->
  <path class="ticks" d="M1860 172H1864M1860 213H1864M1860 254H1864M1860 295H1864M1860 337H1864M1860 378H1864M1860 418H1864M1860 459H1864M1860 500H1864M1860 541H1864M1860 583H1864M1860 623H1864M1860 665H1864M1860 705H1864M1860 728H1864M1860 779H1864M1860 830H1864M1860 880H1864M5 951V955M85 951V955M165 951V955M245 951V955M325 951V955M405 951V955M485 951V955M565 951V955M645 951V955M725 951V955M805 951V955M885 951V955M965 951V955M1045 951V955M1125 951V955M1205 951V955M1285 951V955M1365 951V955M1445 951V955"/>
  <g class="t-ax">
    <text x="1865" y="136">2360.65</text><text x="1865" y="177">2361.55</text><text x="1865" y="218">2353.30</text><text x="1865" y="259">2345.20</text><text x="1865" y="300">2337.10</text><text x="1865" y="341">2329.00</text><text x="1865" y="382">2320.90</text><text x="1865" y="423">2312.65</text><text x="1865" y="464">2304.55</text><text x="1865" y="505">2296.45</text><text x="1865" y="546">2288.35</text><text x="1865" y="587">2280.10</text><text x="1865" y="628">2272.00</text><text x="1865" y="669">2263.90</text><text x="1865" y="710">2255.80</text>
    <text x="1863" y="733">75</text><text x="1863" y="784">56</text><text x="1863" y="835">37</text><text x="1863" y="885">18</text><text x="1863" y="916">0</text>
    <text x="1863" y="934">0.1</text><text x="1863" y="941">0.00</text><text x="1863" y="949">-0.1</text>
  </g>
  <rect class="box-k" x="1860" y="132" width="55" height="14"/>
  <rect class="box-b" x="1860" y="513" width="55" height="13"/>
  <rect class="box-r" x="1860" y="859" width="55" height="14"/>
  <g class="t-box"><text x="1863" y="144">2368.04</text><text x="1863" y="524">2292.62</text><text x="1863" y="871">20.0000</text></g>
  <g class="t-ax">
    <text x="4" y="966">13 Jan 2017</text><text x="84" y="966">17 Jan 17:00</text><text x="164" y="966">19 Jan 09:00</text><text x="244" y="966">23 Jan 01:00</text><text x="324" y="966">24 Jan 17:00</text><text x="404" y="966">26 Jan 09:00</text><text x="484" y="966">30 Jan 01:00</text><text x="564" y="966">31 Jan 17:00</text><text x="644" y="966">2 Feb 09:00</text><text x="724" y="966">6 Feb 01:00</text><text x="804" y="966">7 Feb 17:00</text><text x="884" y="966">9 Feb 09:00</text><text x="964" y="966">13 Feb 01:00</text><text x="1044" y="966">14 Feb 17:00</text><text x="1124" y="966">16 Feb 09:00</text><text x="1204" y="966">20 Feb 01:00</text><text x="1284" y="966">21 Feb 21:00</text><text x="1364" y="966">23 Feb 13:00</text><text x="1444" y="966">27 Feb 05:00</text>
  </g>
</svg>
</main>

<div class="tabs">
  <div class="tablist">
    <span class="tab">NZDUSD,H4</span><span class="tab">GBPUSD,M15</span><span class="tab">GBPUSD,H4</span><span class="tab">USDJPY,M15</span><span class="tab">USDJPY,H4</span><span class="tab">GBPJPY,M15</span><span class="tab">GBPJPY,H4</span><span class="tab">USDCAD,M15</span><span class="tab">USDCAD,H4</span><span class="tab">ASX200,H4</span><span class="tab">WS30,H4</span><span class="tab active">US500,H4</span><span class="tab">NDX100,H4</span><span class="tab">FTSE100,H4</span><span class="tab">DAX30,H4</span><span class="tab">GBPAUD,M15</span><span class="tab">GBPAUD,H4</span><span class="tab last">GBPNZD,M</span>
  </div>
  <div class="tabnav"><i class="nav-l"></i><i class="nav-r"></i></div>
</div>

<footer class="status">
  <span>For Help, press F1</span>
  <span>Default</span>
  <span>2017.01.16 17:00</span>
  <span>O: 2270.94</span>
  <span>H: 2272.69</span>
  <span>L: 2270.45</span>
  <span>C: 2270.95</span>
  <span>V: 208</span>
  <span class="conn">
    <svg class="connbars" viewBox="0 0 32 16"><path d="M1 16V10h3v6zM5 16V9h3v7zM9 16V8h3v8zM13 16V7h3v9zM17 16V6h3v10zM21 16V5h3v11zM25 16V4h3v12zM29 16V3h3v13z" fill="#0d5a80"/><path d="M1 9V4h3v5zM5 8V3.500h3V8zM9 7V3h3v4zM13 6V2.500h3V6zM17 5V2h3v3zM21 4V1.500h3V4z" fill="#7a9a20"/></svg>
    16978/119 kb
  </span>
</footer>

<div class="taskbar">
  <span class="tk tk60"><svg class="ti" viewBox="0 0 24 24"><path d="M2 5L11 3.700V11.500H2ZM12 3.500L22 2V11.500H12ZM2 12.500H11V20.300L2 19ZM12 12.500H22V22L12 20.500Z" fill="#fff"/></svg></span>
  <span class="tk tk60 tkgap"><svg class="ti" viewBox="0 0 24 24"><path d="M6 4H18V20H6ZM3.500 8H1V16H3.500M20.500 8H23V16H20.500" fill="none" stroke="#fff"/></svg></span>
  <span class="tk"><svg class="ti" viewBox="0 0 24 24"><path d="M3 13C3 6 8 2 13 2C19 2 22 6 22 13H9C9 18 15 20 21 17V21C14 24 4 22 4 14C5 11 7 8 10 7C8 9 7.500 10 7.500 10.500H16C16 6 10 4.500 6.500 8C5 9.500 4 11 3 13Z" fill="#0f78d4"/></svg></span>
  <span class="tk on"><svg class="ti t28" viewBox="0 0 24 24"><circle cx="12" cy="12" r="11.500" fill="#a8323a"/><circle cx="12" cy="12" r="9" fill="#e8e8e8"/><path d="M3 15L8 9L11 13L15 5L17 11L21 8" fill="none" stroke="#d8202c" stroke-width="2.400"/></svg></span>
  <span class="tk"><svg class="ti t28" viewBox="0 0 24 24"><path d="M1 3H9L11 5H23V22H1Z" fill="#f7d774"/><path d="M1 6H9L11 5" fill="none" stroke="#c8a040"/><path d="M5 22V14L12 10L19 14V22H15V18H9V22Z" fill="#2ea3dc"/></svg></span>
  <span class="tk"><svg class="ti t28" viewBox="0 0 24 28"><rect x="1" y="0" width="22" height="28" fill="#fff"/><rect x="3" y="2" width="18" height="5" fill="#111"/><path d="M4 11h3v3H4zM10 11h3v3h-3zM16 11h3v3h-3zM4 16h3v3H4zM10 16h3v3h-3zM16 16h3v3h-3zM4 21h3v3H4zM10 21h3v3h-3zM16 21h3v3h-3z" fill="#222"/></svg></span>
  <span class="tk"><svg class="ti t28" viewBox="0 0 24 28"><path d="M2 7H22L23 27H3Z" fill="#fff"/><path d="M8 7C8 2 16 0 16 7" fill="none" stroke="#fff" stroke-width="1.400"/><path d="M8 12H12V16H8ZM13 12H17V16H13ZM8 17H12V21H8ZM13 17H17V21H13Z" fill="#111"/></svg></span>
  <span class="tk"><b class="ksq">K</b></span>
  <span class="tk"><span class="shield"><svg viewBox="0 0 24 24"><path d="M12 3L21 6V13C21 18 16 21 12 23C8 21 3 18 3 13V6Z" fill="#fff"/><path d="M12 3V23M3 11H21" stroke="#0f78d4" stroke-width="2"/></svg></span></span>
  <span class="tk"><svg class="ti t30" viewBox="0 0 24 30"><ellipse cx="9" cy="9" rx="8" ry="7" fill="#cfcfcf" stroke="#b8484a"/><path d="M2 8L16 6" stroke="#b8484a"/><path d="M10 14L20 22M16 13L13 24" stroke="#4a90c4" stroke-width="1.400"/><circle cx="20" cy="25" r="3" fill="none" stroke="#4a90c4" stroke-width="1.500"/><circle cx="12" cy="26" r="3" fill="none" stroke="#4a90c4" stroke-width="1.500"/></svg></span>
  <span class="tk on"><svg class="ti t28" viewBox="0 0 24 24"><rect x="5" y="2" width="18" height="20" fill="#a8cdee"/><rect x="9" y="6" width="13" height="13" fill="#dcecf8"/><circle cx="7" cy="14" r="4" fill="#e8a878"/><path d="M1 23C1 18 13 18 13 23Z" fill="#5cb04a"/></svg></span>
  <span class="tk on"><svg class="ti t28" viewBox="0 0 24 24"><circle cx="12" cy="12" r="11.500" fill="#dd4b3e"/><path d="M12 12L22.500 9A11.500 11.500 0 0 1 9 23Z" fill="#f4c20d"/><path d="M12 12L9 23A11.500 11.500 0 0 1 2 6Z" fill="#179d57"/><circle cx="12" cy="12" r="5.500" fill="#fff"/><circle cx="12" cy="12" r="4" fill="#4a8bf0"/></svg></span>
  <span class="tk"><svg class="ti t30" viewBox="0 0 24 30"><rect x="7" y="0" width="10" height="3" fill="#e8e878"/><path d="M2 11H8L10 8H14L16 11H22V28H2Z" fill="none" stroke="#ccc" stroke-dasharray="2 1"/><circle cx="12" cy="19" r="5" fill="none" stroke="#ccc" stroke-dasharray="2 1"/><circle cx="12" cy="19" r="1.500" fill="#ccc"/></svg></span>
  <span class="tk on"><span class="gotile">G<svg viewBox="0 0 12 12"><path d="M2 11C0 5 4 1 7 2C10 3 12 7 10 11" fill="none" stroke="#1a8a4a" stroke-width="1.600"/></svg></span></span>

  <div class="tray">
    <span class="tr c38"><svg class="tri-i" viewBox="0 0 18 18"><path d="M3 12L9 5L15 12" fill="none" stroke="#ddd" stroke-width="1.300"/></svg></span>
    <span class="tr c42"><svg class="tri-i" viewBox="0 0 18 18"><path d="M3 17C3 10 8 4 16 3M6 17C6 12 10 8 16 7M9 17C9 14 12 11 16 11" fill="none" stroke="#ccc" stroke-dasharray="2 1"/><circle cx="14" cy="16" r="1.600" fill="#fff"/></svg></span>
    <span class="tr c38"><svg class="tri-i" viewBox="0 0 18 18"><path d="M1 1H17V17H1Z" fill="#fff"/><path d="M3 3H15V8H3ZM3 10H8V15H3ZM10 10H15V15H10Z" fill="#111"/></svg></span>
    <span class="tr c41"><svg class="tri-i" viewBox="0 0 18 18"><path d="M2 6H5L10 2V16L5 12H2Z" fill="none" stroke="#ccc"/><path d="M12 6C14 8 14 10 12 12M14 3C17 7 17 11 14 15" fill="none" stroke="#ccc"/></svg></span>
    <span class="tr c44"><svg class="tri-i" viewBox="0 0 20 18"><rect x="5" y="5" width="14" height="10" fill="none" stroke="#ddd"/><rect x="6" y="6" width="8" height="8" fill="#eee"/><path d="M3 2V7M1 3H5" stroke="#e8e8a0" stroke-width="1.500"/></svg></span>
    <span class="tr c45"><svg class="tri-i" viewBox="0 0 18 18"><path d="M3 16L6 8L11 3C13 1 16 3 14 5L10 10L8 8M6 16L12 9C14 7 16 9 14 11L12 13" fill="none" stroke="#ddd" stroke-width="1.200"/></svg></span>
    <span class="tr c53"><svg class="kbd" viewBox="0 0 30 20"><rect x="1" y="1" width="28" height="18" fill="none" stroke="#ddd"/><path d="M4 6H26M4 10H26M8 14.500H22" stroke="#ccc" stroke-dasharray="1 1"/></svg></span>
    <span class="tr c42 eng">ENG</span>
    <span class="tr c95 clock"><span>2:42 PM</span><span>28/02/2017</span></span>
    <span class="tr c65 note"><svg class="notei" viewBox="0 0 24 24"><path d="M3 2H22V18H10L6 22V18H3Z" fill="#fff"/><path d="M6 7H19M6 11H19M6 15H15" stroke="#222"/></svg><b class="badge">1</b></span>
  </div>
</div>
</body>
</html>
```
FILE: styles.css
```css
* { box-sizing: border-box; }
html, body { margin: 0; padding: 0; width: 1920px; height: 1080px; overflow: hidden; background: #fff; }
body { font-family: "Liberation Sans", Arial, sans-serif; display: flex; flex-direction: column; }
.defs { position: absolute; }

.titlebar { height: 29px; display: flex; align-items: center; background: #fff; flex: none; }
.logo { width: 20px; height: 20px; margin-left: 2px; background: #333; color: #999; font-size: 11px; line-height: 20px; text-align: center; }
.logo i { color: #2a8a5a; font-style: normal; }
.title { margin-left: 5px; font-size: 14.6px; color: #808080; }
.winctl { margin-left: auto; display: flex; }
.wc { width: 14px; height: 14px; margin-right: 45px; }
.wc:last-child { margin-right: 25px; }

.menubar { height: 25px; flex: none; display: flex; align-items: center; gap: 20px; background: #f0f0f0; font-size: 14.8px; color: #a8a8a8; padding-left: 4px; }
.appicon { width: 22px; height: 22px; margin-right: -11px; }
.mdi { margin-left: auto; display: flex; height: 25px; gap: 3px; padding-right: 1px; }
.mdi b { width: 22px; background: #e4e4e4; color: #777; font-weight: 400; font-size: 11px; line-height: 25px; text-align: center; }

.toolbar { height: 35px; flex: none; display: flex; align-items: center; background: #f0f0f0; border-top: 2px solid #a6a6a6; border-bottom: 2px solid #8c8c8c; font-size: 15px; color: #222; }
.grip { display: block; width: 8px; height: 26px; flex: none; background: repeating-linear-gradient(180deg, #9a9a9a 0 1px, transparent 1px 3px); background-size: 4px 100%; background-repeat: no-repeat; background-position: 2px 0; }
.grip.g6 { width: 6px; }
.grip.g11 { width: 11px; background-position: 3px 0; }
.grip.g12 { width: 12px; background-position: 5px 0; }
.sep { display: block; width: 4px; height: 27px; flex: none; background: linear-gradient(#b0b0b0, #b0b0b0) center / 1px 100% no-repeat; }
.sep.s6 { width: 6px; }
.sep.s4 { width: 4px; }
.tb { height: 31px; flex: none; display: flex; align-items: center; justify-content: center; }
.tb svg { width: 23px; height: 23px; flex: none; }
.tb.on, .tf.on { background: #f8f8f8; border: 1px solid #d0d0d0; border-bottom-color: #fff; }
.w24 { width: 24px; } .w30 { width: 30px; } .w32 { width: 32px; } .w33 { width: 33px; } .w34 { width: 34px; } .w35 { width: 35px; } .w36 { width: 36px; } .w38 { width: 38px; }
.w40 { width: 40px; } .w44 { width: 44px; } .w46 { width: 46px; } .w48 { width: 48px; } .w50 { width: 50px; }
.w116 { width: 116px; } .w118 { width: 118px; }
.drop { justify-content: flex-start; gap: 5px; }
.p0 { padding-left: 0; } .p3 { padding-left: 3px; } .p4 { padding-left: 4px; } .p7 { padding-left: 7px; }
.drop em { width: 0; height: 0; border: 4px solid transparent; border-top: 5px solid #222; border-bottom: 0; }
.txt { justify-content: flex-start; gap: 5px; padding-left: 5px; white-space: nowrap; }
.txt.auto { margin-left: 6px; padding-left: 2px; }
.letter { font-weight: 700; font-size: 15px; color: #666; }
.tf { width: 34px; height: 31px; flex: none; display: flex; align-items: center; justify-content: center; font-size: 13px; color: #666; }
.push { margin-left: auto; }

.chart { height: 887px; flex: none; }
.plot { display: block; }
.grid { stroke: #e4e4e4; stroke-width: 1; stroke-dasharray: 1 3; fill: none; }
.bid { stroke: #f0ecc8; stroke-dasharray: 2 2; fill: none; }
.dash { stroke: #000; stroke-width: 1; stroke-dasharray: 4 3; fill: none; }
.bb { fill: none; stroke: #a0cbd8; stroke-width: 1; stroke-linejoin: round; }
.wg { stroke: #00e000; stroke-width: 1; fill: none; }
.wr { stroke: #e81010; stroke-width: 1; fill: none; }
.bg { stroke: #00ee10; stroke-width: 5; fill: none; }
.br { stroke: #ee1010; stroke-width: 5; fill: none; }
.teal { fill: none; stroke: #187a72; stroke-width: 2.4; stroke-linejoin: round; }
.red { fill: none; stroke: #e81010; stroke-width: 2; stroke-linejoin: round; }
.blue { fill: none; stroke: #0808d0; stroke-width: 2; stroke-linejoin: round; }
.ma200 { fill: none; stroke: #7a4a24; stroke-width: 2.4; stroke-linejoin: round; }
.trend { fill: none; stroke: #7a3a1a; stroke-width: 1; }
.lvl-d { fill: none; stroke: #b02040; stroke-width: 1.600; }
.lvl-b { fill: none; stroke: #4a64a8; stroke-width: 1.300; }
.lvl-dr { fill: none; stroke: #a03040; }
.lvl-g { fill: none; stroke: #2a7a2a; stroke-width: 1.500; }
.lvl-gg { fill: none; stroke: #0c5a0c; stroke-width: 3; }
.lvl-v { fill: none; stroke: #a060b8; stroke-width: 1.300; }
.lvl-m { fill: none; stroke: #a82868; stroke-width: 1.300; }
.lvl-rd { fill: none; stroke: #d01828; stroke-dasharray: 2 2; }
.lvl-nv { fill: none; stroke: #283080; stroke-dasharray: 2 2; }
.hline { fill: none; stroke: #1010c0; stroke-width: 1; }
.frame { fill: none; stroke: #000; stroke-width: 1; }
.frame-l { fill: none; stroke: #a0a0a0; stroke-width: 1; }
.ticks { fill: none; stroke: #000; stroke-width: 1; }
.l20 { fill: none; stroke: #a52a2a; stroke-width: 1; }
.a-g { fill: none; stroke: #4aa04a; stroke-width: .8; vector-effect: non-scaling-stroke; }
.a-r { fill: none; stroke: #d81020; stroke-width: .8; vector-effect: non-scaling-stroke; }
.a-k { fill: none; stroke: #111; stroke-width: .9; vector-effect: non-scaling-stroke; }
.ring { fill: none; stroke: #ee10d8; stroke-width: 2; }
.chainline { fill: none; stroke: #111; stroke-width: 1.500; }
.ar-g { fill: #0a7a14; }
.ar-o { fill: #fff; stroke: #2a8a2a; stroke-width: .8; }
.ar-r { fill: #e81010; }
.ar-ro { fill: #fff; stroke: #e0503a; stroke-width: .8; }
.pv-line { fill: none; stroke: #a8a8a8; stroke-width: 1; }
.pv-b { fill: #fff; stroke: #4a88bc; stroke-width: 2; }
.pv-c { fill: #fff; stroke: #4a88bc; stroke-width: 2; }
.tri { fill: #111; }
.bar-g { fill: none; stroke: #10ee20; stroke-width: 6; }
.bar-r { fill: none; stroke: #f06040; stroke-width: 6; }
.box-k { fill: #000; }
.box-b { fill: #0c0ce0; }
.box-r { fill: #b22424; }

.t-ax text { font-size: 12.6px; fill: #222; }
.t-box text { font-size: 12.6px; fill: #fff; }
.t-h { font-size: 12.6px; fill: #222; }
.t-tf { font-size: 11.3px; font-weight: 700; fill: #1414d0; }
.t-sg { font-size: 13px; fill: #1414d0; }
.t-sm { font-size: 11px; fill: #1414d0; }
.t-or { font-size: 25px; fill: #ffa500; }
.t-l { font-size: 14.4px; fill: #1414d0; }
.t-n { font-size: 14px; font-weight: 700; }
.n-o { fill: #ff8c00; } .n-g { fill: #10e020; } .n-r { fill: #ee4a1a; }
.t-wm { font-size: 13.3px; fill: #8a8a8a; }
.t-wk { font-size: 13px; fill: #999; }
.t-mr { font-size: 14px; fill: #2a2a6a; }
.t-big { font-size: 25px; fill: #e81818; }
.t-wp { font-size: 13.5px; fill: #b878d8; }
.t-four { font-size: 20px; fill: #8a5a2a; }
.t-tc { font-size: 12.6px; fill: #222; }
.t-pv { font-size: 10px; fill: #aab; }

.tabs { height: 26px; flex: none; display: flex; background: #fafafa; border-top: 2px solid #111; border-bottom: 1px solid #ddd; }
.tablist { width: 1870px; display: grid; grid-template-columns: 115px 116px 105px 108px 100px 107px 96px 121px 107px 100px 89px 90px 105px 104px 96px 117px 108px 86px; overflow: hidden; }
.tab { display: flex; align-items: center; justify-content: center; font-size: 13.8px; color: #888; white-space: nowrap; border-right: 1px solid #bbb; height: 22px; margin-top: 1px; }
.tab.last { border-right: 0; }
.tab.active { background: #fff; color: #111; height: 24px; margin-top: -1px; border-left: 2px solid #111; border-right: 2px solid #111; border-bottom: 2px solid #111; }
.tabnav { display: flex; align-items: center; gap: 14px; padding-left: 10px; }
.nav-l { width: 0; height: 0; border: 4px solid transparent; border-right: 5px solid #111; border-left: 0; }
.nav-r { width: 0; height: 0; border: 4px solid transparent; border-left: 5px solid #111; border-right: 0; }

.status { height: 28px; flex: none; display: grid; grid-template-columns: 1048px 148px 131px 89px 89px 86px 87px 84px 158px; align-items: center; background: #f0f0f0; font-size: 14.2px; color: #222; }
.status span { height: 100%; display: flex; align-items: center; padding-left: 5px; border-left: 1px solid #b8b8b8; white-space: nowrap; }
.status span:first-child { padding-left: 2px; border-left: 0; }
.status .conn { gap: 5px; padding-left: 4px; }
.connbars { width: 32px; height: 16px; }

.taskbar { height: 50px; flex: none; display: flex; align-items: center; background: #0a0908; color: #ddd; }
.tk { width: 62px; height: 50px; flex: none; display: flex; align-items: center; justify-content: center; position: relative; }
.tk60 { width: 60px; }
.tkgap { margin-right: 3px; }
.tk.on::after { content: ""; position: absolute; left: 6px; right: 5px; bottom: 0; height: 3px; background: #f8e8c8; }
.ti { width: 26px; height: 26px; }
.t28 { width: 28px; height: 30px; }
.t30 { width: 26px; height: 32px; }
.ksq { width: 30px; height: 30px; background: #e60000; color: #fff; font-size: 24px; line-height: 30px; text-align: center; font-weight: 700; }
.shield { width: 30px; height: 30px; background: #0f78d4; display: flex; align-items: center; justify-content: center; }
.shield svg { width: 26px; height: 26px; }
.gotile { width: 29px; height: 30px; background: #333; color: #999; font-size: 15px; display: flex; align-items: center; justify-content: center; }
.gotile svg { width: 12px; height: 12px; }
.tray { margin-left: auto; display: flex; height: 50px; align-items: center; }
.tr { height: 50px; flex: none; display: flex; align-items: center; justify-content: center; }
.c38 { width: 38px; } .c41 { width: 41px; } .c42 { width: 42px; } .c44 { width: 44px; } .c45 { width: 45px; } .c53 { width: 53px; } .c65 { width: 65px; } .c95 { width: 95px; }
.tri-i { width: 18px; height: 18px; }
.kbd { width: 30px; height: 20px; }
.eng { font-size: 14.4px; color: #ddd; }
.clock { flex-direction: column; gap: 7px; font-size: 14.4px; color: #ddd; }
.note { position: relative; }
.notei { width: 20px; height: 22px; margin-right: 2px; }
.badge { position: absolute; left: 33px; top: 24px; width: 20px; height: 20px; border-radius: 50%; border: 2px solid #888; background: #222; color: #eee; font-weight: 400; font-size: 13px; line-height: 16px; text-align: center; }
```
